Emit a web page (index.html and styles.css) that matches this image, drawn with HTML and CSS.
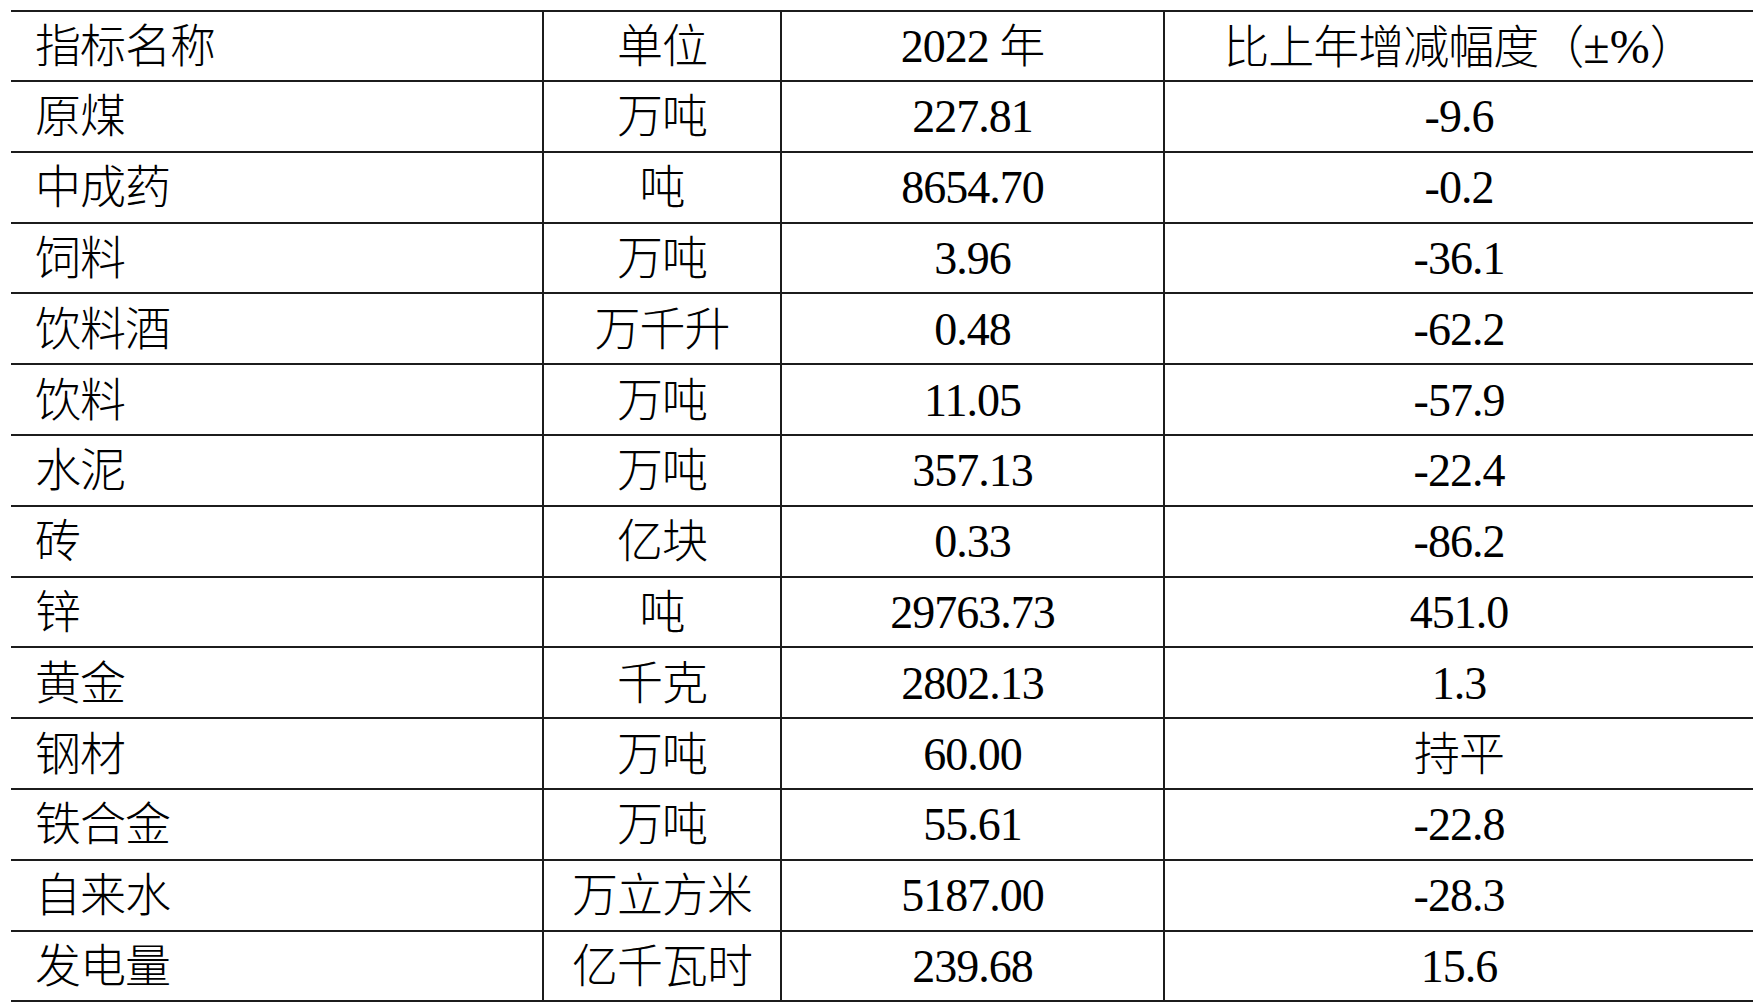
FILE: index.html
```html
<!DOCTYPE html>
<html lang="zh-CN">
<head>
<meta charset="utf-8">
<title>主要工业产品产量</title>
<link rel="stylesheet" href="styles.css">
</head>
<body>
<table class="data-table">
  <colgroup>
    <col class="col-name">
    <col class="col-unit">
    <col class="col-value">
    <col class="col-change">
  </colgroup>
  <thead>
    <tr>
      <th class="name">指标名称</th>
      <th>单位</th>
      <th>2022 年</th>
      <th>比上年增减幅度（<span class="latin">±%</span>）</th>
    </tr>
  </thead>
  <tbody>
    <tr><td class="name">原煤</td><td>万吨</td><td>227.81</td><td>-9.6</td></tr>
    <tr><td class="name">中成药</td><td>吨</td><td>8654.70</td><td>-0.2</td></tr>
    <tr><td class="name">饲料</td><td>万吨</td><td>3.96</td><td>-36.1</td></tr>
    <tr><td class="name">饮料酒</td><td>万千升</td><td>0.48</td><td>-62.2</td></tr>
    <tr><td class="name">饮料</td><td>万吨</td><td>11.05</td><td>-57.9</td></tr>
    <tr><td class="name">水泥</td><td>万吨</td><td>357.13</td><td>-22.4</td></tr>
    <tr><td class="name">砖</td><td>亿块</td><td>0.33</td><td>-86.2</td></tr>
    <tr><td class="name">锌</td><td>吨</td><td>29763.73</td><td>451.0</td></tr>
    <tr><td class="name">黄金</td><td>千克</td><td>2802.13</td><td>1.3</td></tr>
    <tr><td class="name">钢材</td><td>万吨</td><td>60.00</td><td>持平</td></tr>
    <tr><td class="name">铁合金</td><td>万吨</td><td>55.61</td><td>-22.8</td></tr>
    <tr><td class="name">自来水</td><td>万立方米</td><td>5187.00</td><td>-28.3</td></tr>
    <tr><td class="name">发电量</td><td>亿千瓦时</td><td>239.68</td><td>15.6</td></tr>
  </tbody>
</table>
</body>
</html>
```

FILE: styles.css
```css
html, body {
  background: #ffffff;
}

body {
  margin: 10px 0 0 11px;
  color: #000000;
  font-family: "Liberation Serif", "Noto Sans CJK SC", serif;
}

.data-table {
  width: 1742px;
  border-collapse: separate;
  border-spacing: 0;
  table-layout: fixed;
}

.col-name { width: 531px; }
.col-unit { width: 238px; }
.col-value { width: 383px; }
.col-change { width: 590px; }

.data-table th,
.data-table td {
  box-sizing: border-box;
  height: 70.8px;
  padding: 2px 0 0 0;
  font-size: 46px;
  font-weight: 300;
  line-height: 1;
  letter-spacing: -1px;
  text-align: center;
  vertical-align: middle;
  border-bottom: 2px solid #1c1c1c;
  border-left: 2px solid #1c1c1c;
  white-space: nowrap;
}

.data-table th {
  height: 72px;
  border-top: 2px solid #1c1c1c;
}

.data-table .name {
  text-align: left;
  padding-left: 24px;
  border-left: none;
}

.latin {
  font-family: "Liberation Serif", serif;
  font-size: 48px;
  letter-spacing: 0;
}
```
